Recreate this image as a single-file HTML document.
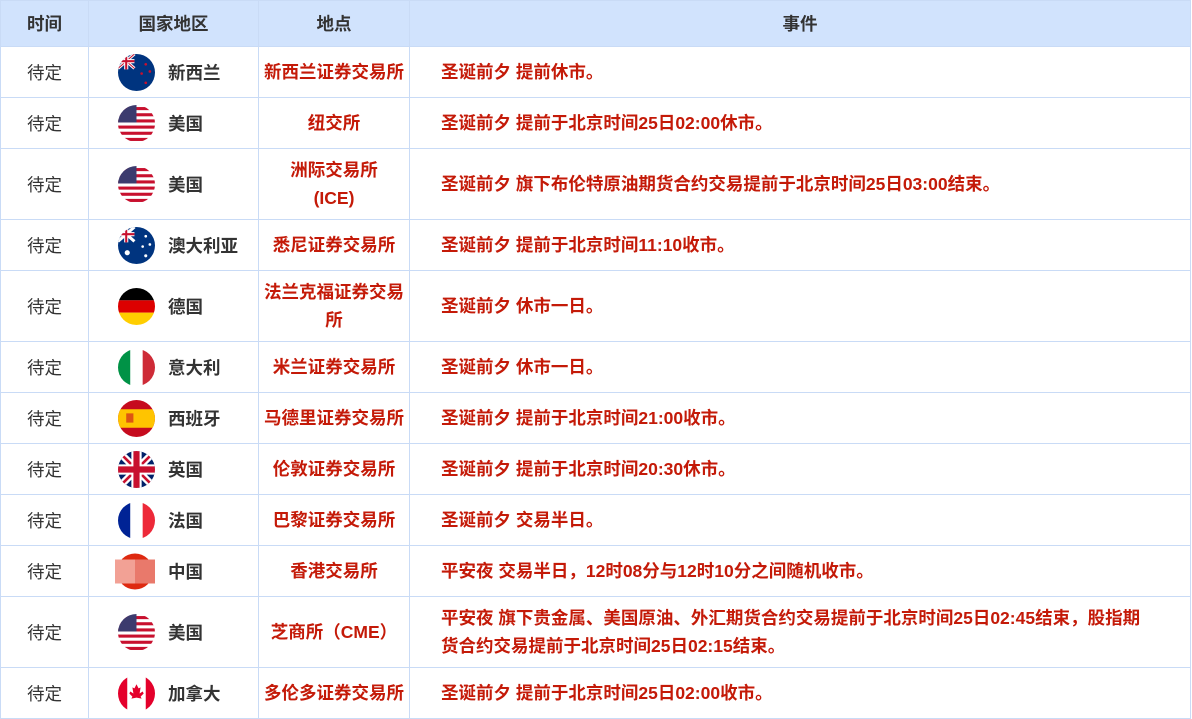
<!DOCTYPE html>
<html><head><meta charset="utf-8"><style>
body{margin:0;width:1192px;height:718px;overflow:hidden;background:#fff;font-family:"Liberation Sans","Noto Sans CJK SC",sans-serif;}
table{border-collapse:collapse;position:absolute;left:0;top:0;width:1191px;table-layout:fixed}
td,th{border:1px solid #c9dbf6;padding:0;font-size:17.5px;}
th{background:#d1e3fd;color:#333;height:45px;font-weight:bold}
td{text-align:center;color:#333}
td.p{color:#c41a08;font-weight:bold;line-height:28px}
td.e{color:#c41a08;font-weight:bold;text-align:left;padding-left:31px;line-height:28px}
.c{display:flex;align-items:center;font-weight:bold;padding-left:29px}
.c svg{width:37px;height:37px;margin-right:13px;flex:none}
</style></head><body>
<svg width="0" height="0" style="position:absolute">
<defs>
<clipPath id="cc"><circle cx="18" cy="18" r="18"/></clipPath>
<g id="us"><g clip-path="url(#cc)"><rect width="36" height="36" fill="#fff"/><g fill="#c8102e"><rect y="2" width="36" height="3"/><rect y="8" width="36" height="3"/><rect y="14" width="36" height="3"/><rect y="20" width="36" height="3"/><rect y="26" width="36" height="3"/><rect y="32" width="36" height="3"/></g><rect width="18" height="17" fill="#3c3b6e"/></g></g>
<g id="nz"><g clip-path="url(#cc)"><rect width="36" height="36" fill="#00347f"/><path d="M0 0L16 14M16 0L0 14" stroke="#fff" stroke-width="3"/><path d="M0 0L16 14M16 0L0 14" stroke="#c8102e" stroke-width="1"/><path d="M8 0V15M0 7H16" stroke="#fff" stroke-width="4"/><path d="M8 0V15M0 7H16" stroke="#c8102e" stroke-width="2"/><g fill="#c8102e"><circle cx="27" cy="10" r="1.3"/><circle cx="31" cy="17" r="1.3"/><circle cx="23" cy="19" r="1.3"/><circle cx="27" cy="28" r="1.3"/></g></g></g>
<g id="au"><g clip-path="url(#cc)"><rect width="36" height="36" fill="#00347f"/><path d="M0 0L16 14M16 0L0 14" stroke="#fff" stroke-width="3"/><path d="M8 0V15M0 7H16" stroke="#fff" stroke-width="4"/><path d="M8 0V15M0 7H16" stroke="#c8102e" stroke-width="2"/><g fill="#fff"><circle cx="27" cy="9" r="1.3"/><circle cx="31" cy="17" r="1.3"/><circle cx="24" cy="19" r="1.3"/><circle cx="27" cy="28" r="1.5"/><circle cx="9" cy="25" r="2.5"/></g></g></g>
</defs></svg>
<table>
<colgroup><col style="width:88px"><col style="width:170px"><col style="width:151px"><col></colgroup>
<tr><th>时间</th><th>国家地区</th><th>地点</th><th>事件</th></tr>
<tr style="height:51px"><td>待定</td><td><div class="c"><svg viewBox="0 0 36 36"><use href="#nz"/></svg>新西兰</div></td><td class="p">新西兰证券交易所</td><td class="e">圣诞前夕 提前休市。</td></tr>
<tr style="height:51px"><td>待定</td><td><div class="c"><svg viewBox="0 0 36 36"><use href="#us"/></svg>美国</div></td><td class="p">纽交所</td><td class="e">圣诞前夕 提前于北京时间25日02:00休市。</td></tr>
<tr style="height:71px"><td>待定</td><td><div class="c"><svg viewBox="0 0 36 36"><use href="#us"/></svg>美国</div></td><td class="p">洲际交易所<br>(ICE)</td><td class="e">圣诞前夕 旗下布伦特原油期货合约交易提前于北京时间25日03:00结束。</td></tr>
<tr style="height:51px"><td>待定</td><td><div class="c"><svg viewBox="0 0 36 36"><use href="#au"/></svg>澳大利亚</div></td><td class="p">悉尼证券交易所</td><td class="e">圣诞前夕 提前于北京时间11:10收市。</td></tr>
<tr style="height:71px"><td>待定</td><td><div class="c"><svg viewBox="0 0 36 36"><g clip-path="url(#cc)"><rect width="36" height="12" fill="#000"/><rect y="12" width="36" height="12" fill="#dd0000"/><rect y="24" width="36" height="12" fill="#ffce00"/></g></svg>德国</div></td><td class="p">法兰克福证券交易<br>所</td><td class="e">圣诞前夕 休市一日。</td></tr>
<tr style="height:51px"><td>待定</td><td><div class="c"><svg viewBox="0 0 36 36"><g clip-path="url(#cc)"><rect width="12" height="36" fill="#009246"/><rect x="12" width="12" height="36" fill="#fff"/><rect x="24" width="12" height="36" fill="#ce2b37"/></g></svg>意大利</div></td><td class="p">米兰证券交易所</td><td class="e">圣诞前夕 休市一日。</td></tr>
<tr style="height:51px"><td>待定</td><td><div class="c"><svg viewBox="0 0 36 36"><g clip-path="url(#cc)"><rect width="36" height="36" fill="#c60b1e"/><rect y="9" width="36" height="18" fill="#ffc400"/><rect x="8" y="13" width="7" height="9" fill="#c60b1e" opacity=".6"/></g></svg>西班牙</div></td><td class="p">马德里证券交易所</td><td class="e">圣诞前夕 提前于北京时间21:00收市。</td></tr>
<tr style="height:51px"><td>待定</td><td><div class="c"><svg viewBox="0 0 36 36"><g clip-path="url(#cc)"><rect width="36" height="36" fill="#012169"/><path d="M0 0L36 36M36 0L0 36" stroke="#fff" stroke-width="7"/><path d="M0 0L36 36M36 0L0 36" stroke="#c8102e" stroke-width="2.5"/><path d="M18 0V36M0 18H36" stroke="#fff" stroke-width="10"/><path d="M18 0V36M0 18H36" stroke="#c8102e" stroke-width="6"/></g></svg>英国</div></td><td class="p">伦敦证券交易所</td><td class="e">圣诞前夕 提前于北京时间20:30休市。</td></tr>
<tr style="height:51px"><td>待定</td><td><div class="c"><svg viewBox="0 0 36 36"><g clip-path="url(#cc)"><rect width="12" height="36" fill="#002395"/><rect x="12" width="12" height="36" fill="#fff"/><rect x="24" width="12" height="36" fill="#ed2939"/></g></svg>法国</div></td><td class="p">巴黎证券交易所</td><td class="e">圣诞前夕 交易半日。</td></tr>
<tr style="height:51px"><td>待定</td><td><div class="c" style="padding-left:26px"><svg viewBox="0 0 40 36" style="width:40px;margin-right:13px"><circle cx="20" cy="18" r="18" fill="#de2910"/><rect x="0" y="6" width="40" height="24" fill="#f2a195"/><rect x="20" y="6" width="20" height="24" fill="#e9796b"/></svg>中国</div></td><td class="p">香港交易所</td><td class="e">平安夜 交易半日，12时08分与12时10分之间随机收市。</td></tr>
<tr style="height:71px"><td>待定</td><td><div class="c"><svg viewBox="0 0 36 36"><use href="#us"/></svg>美国</div></td><td class="p">芝商所（CME）</td><td class="e">平安夜 旗下贵金属、美国原油、外汇期货合约交易提前于北京时间25日02:45结束，股指期<br>货合约交易提前于北京时间25日02:15结束。</td></tr>
<tr style="height:51px"><td>待定</td><td><div class="c"><svg viewBox="0 0 36 36"><g clip-path="url(#cc)"><rect width="36" height="36" fill="#fff"/><rect width="9" height="36" fill="#e4002b"/><rect x="27" width="9" height="36" fill="#e4002b"/><path d="M18 9L20 13L22 12L21 18L24 16L25 18L22 21L23 23L18 22V27H18V22L13 23L14 21L11 18L12 16L15 18L14 12L16 13Z" fill="#e4002b"/></g></svg>加拿大</div></td><td class="p">多伦多证券交易所</td><td class="e">圣诞前夕 提前于北京时间25日02:00收市。</td></tr>
</table>
</body></html>
